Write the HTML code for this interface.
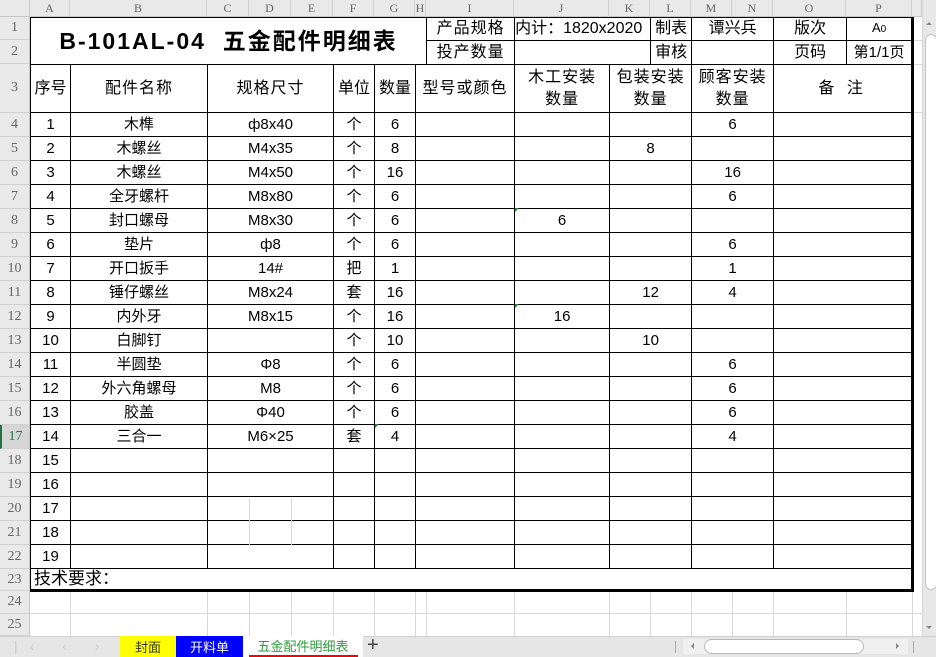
<!DOCTYPE html>
<html><head><meta charset="utf-8">
<style>
*{margin:0;padding:0;box-sizing:border-box}
body{width:936px;height:657px;overflow:hidden;background:#fff;position:relative;font-family:"Liberation Sans","Noto Sans CJK SC",sans-serif}
.hd{position:absolute;background:#e9e9e9;color:#666;font-family:"Liberation Serif","Noto Serif CJK SC",serif;font-size:12px;text-align:center}
.ch{top:0;height:17px;line-height:17px;border-right:1px solid #d0d0d0;border-bottom:1px solid #c8c8c8}
.rh{left:0;width:30px;border-bottom:1px solid #d0d0d0;border-right:1px solid #c8c8c8;font-size:14px;display:flex;align-items:center;justify-content:center}
.vl{position:absolute;width:1px;background:#d8d8d8}
.hl{position:absolute;height:1px;background:#d8d8d8}
table.f{position:absolute;left:30px;top:17px;border-collapse:collapse;table-layout:fixed;width:882px}
table.f td{border:1px solid #000;text-align:center;font-size:15px;color:#000;padding:0;white-space:nowrap;overflow:hidden;line-height:18px}
table.f tr.d td{height:24px}
.b{border-right:3px solid #000 !important}
</style></head><body>
<div class="hd" style="left:0;top:0;width:30px;height:17px;border-right:1px solid #c8c8c8;border-bottom:1px solid #c8c8c8"></div>
<div class="hd ch" style="left:30px;width:40px">A</div>
<div class="hd ch" style="left:70px;width:137px">B</div>
<div class="hd ch" style="left:207px;width:42px">C</div>
<div class="hd ch" style="left:249px;width:42px">D</div>
<div class="hd ch" style="left:291px;width:42px">E</div>
<div class="hd ch" style="left:333px;width:41px">F</div>
<div class="hd ch" style="left:374px;width:41px">G</div>
<div class="hd ch" style="left:415px;width:11px">H</div>
<div class="hd ch" style="left:426px;width:88px">I</div>
<div class="hd ch" style="left:514px;width:95px">J</div>
<div class="hd ch" style="left:609px;width:41px">K</div>
<div class="hd ch" style="left:650px;width:41px">L</div>
<div class="hd ch" style="left:691px;width:41px">M</div>
<div class="hd ch" style="left:732px;width:41px">N</div>
<div class="hd ch" style="left:773px;width:73px">O</div>
<div class="hd ch" style="left:846px;width:66px">P</div>
<div class="hd ch" style="left:912px;width:10px"></div>
<div class="hd rh" style="top:17px;height:23px">1</div>
<div class="hd rh" style="top:40px;height:24px">2</div>
<div class="hd rh" style="top:64px;height:49px">3</div>
<div class="hd rh" style="top:113px;height:24px">4</div>
<div class="hd rh" style="top:137px;height:24px">5</div>
<div class="hd rh" style="top:161px;height:24px">6</div>
<div class="hd rh" style="top:185px;height:24px">7</div>
<div class="hd rh" style="top:209px;height:24px">8</div>
<div class="hd rh" style="top:233px;height:24px">9</div>
<div class="hd rh" style="top:257px;height:24px">10</div>
<div class="hd rh" style="top:281px;height:24px">11</div>
<div class="hd rh" style="top:305px;height:24px">12</div>
<div class="hd rh" style="top:329px;height:24px">13</div>
<div class="hd rh" style="top:353px;height:24px">14</div>
<div class="hd rh" style="top:377px;height:24px">15</div>
<div class="hd rh" style="top:401px;height:24px">16</div>
<div class="hd rh" style="top:425px;height:24px;color:#217346;background:#d6d6d6;border-left:2px solid #217346">17</div>
<div class="hd rh" style="top:449px;height:24px">18</div>
<div class="hd rh" style="top:473px;height:24px">19</div>
<div class="hd rh" style="top:497px;height:24px">20</div>
<div class="hd rh" style="top:521px;height:24px">21</div>
<div class="hd rh" style="top:545px;height:24px">22</div>
<div class="hd rh" style="top:569px;height:22px">23</div>
<div class="hd rh" style="top:591px;height:23px">24</div>
<div class="hd rh" style="top:614px;height:22px">25</div>
<div class="hl" style="left:30px;top:613px;width:892px"></div>
<div class="vl" style="left:70px;top:590px;height:46px"></div>
<div class="vl" style="left:207px;top:590px;height:46px"></div>
<div class="vl" style="left:249px;top:590px;height:46px"></div>
<div class="vl" style="left:291px;top:590px;height:46px"></div>
<div class="vl" style="left:333px;top:590px;height:46px"></div>
<div class="vl" style="left:374px;top:590px;height:46px"></div>
<div class="vl" style="left:415px;top:590px;height:46px"></div>
<div class="vl" style="left:426px;top:590px;height:46px"></div>
<div class="vl" style="left:514px;top:590px;height:46px"></div>
<div class="vl" style="left:609px;top:590px;height:46px"></div>
<div class="vl" style="left:650px;top:590px;height:46px"></div>
<div class="vl" style="left:691px;top:590px;height:46px"></div>
<div class="vl" style="left:732px;top:590px;height:46px"></div>
<div class="vl" style="left:773px;top:590px;height:46px"></div>
<div class="vl" style="left:846px;top:590px;height:46px"></div>
<div class="vl" style="left:912px;top:590px;height:46px"></div>
<div class="hl" style="left:914px;top:40px;width:8px"></div>
<div class="hl" style="left:914px;top:64px;width:8px"></div>
<div class="hl" style="left:914px;top:112px;width:8px"></div>

<table class="f">
<colgroup><col style="width:40px"><col style="width:137px"><col style="width:42px"><col style="width:42px"><col style="width:42px"><col style="width:41px"><col style="width:41px"><col style="width:11px"><col style="width:88px"><col style="width:95px"><col style="width:41px"><col style="width:41px"><col style="width:41px"><col style="width:41px"><col style="width:73px"><col style="width:66px"></colgroup>
<tr style="height:23px"><td colspan="8" rowspan="2" style="font-size:23px;font-weight:bold;letter-spacing:2px">B-101AL-04&nbsp; 五金配件明细表</td><td style="font-size:16px;letter-spacing:1px">产品规格</td><td colspan="2" style="text-align:left;font-size:16px">内计：1820x2020</td><td style="font-size:16px">制表</td><td colspan="2" style="font-size:16px">谭兴兵</td><td style="font-size:16px">版次</td><td class="b" style="font-size:13px">A<span style="font-size:10px">0</span></td></tr>
<tr style="height:24px"><td style="font-size:16px;letter-spacing:1px">投产数量</td><td colspan="2"></td><td style="font-size:16px">审核</td><td colspan="2"></td><td style="font-size:16px">页码</td><td class="b" style="font-size:15px">第1/1页</td></tr>
<tr style="height:48px"><td style="font-size:16px">序号</td><td style="font-size:16px;letter-spacing:1px">配件名称</td><td colspan="3" style="font-size:16px;letter-spacing:1px">规格尺寸</td><td style="font-size:16px">单位</td><td style="font-size:16px">数量</td><td colspan="2" style="font-size:16px;letter-spacing:1px">型号或颜色</td><td style="font-size:16px;line-height:22px;letter-spacing:1px">木工安装<br>数量</td><td colspan="2" style="font-size:16px;line-height:22px;letter-spacing:1px">包装安装<br>数量</td><td colspan="2" style="font-size:16px;line-height:22px;letter-spacing:1px">顾客安装<br>数量</td><td colspan="2" class="b" style="font-size:16px;letter-spacing:4px">备 注</td></tr>
<tr class="d"><td>1</td><td>木榫</td><td colspan="3">ф8x40</td><td>个</td><td>6</td><td colspan="2"></td><td></td><td colspan="2"></td><td colspan="2">6</td><td colspan="2" class="b"></td></tr>
<tr class="d"><td>2</td><td>木螺丝</td><td colspan="3">M4x35</td><td>个</td><td>8</td><td colspan="2"></td><td></td><td colspan="2">8</td><td colspan="2"></td><td colspan="2" class="b"></td></tr>
<tr class="d"><td>3</td><td>木螺丝</td><td colspan="3">M4x50</td><td>个</td><td>16</td><td colspan="2"></td><td></td><td colspan="2"></td><td colspan="2">16</td><td colspan="2" class="b"></td></tr>
<tr class="d"><td>4</td><td>全牙螺杆</td><td colspan="3">M8x80</td><td>个</td><td>6</td><td colspan="2"></td><td></td><td colspan="2"></td><td colspan="2">6</td><td colspan="2" class="b"></td></tr>
<tr class="d"><td>5</td><td>封口螺母</td><td colspan="3">M8x30</td><td>个</td><td>6</td><td colspan="2"></td><td>6</td><td colspan="2"></td><td colspan="2"></td><td colspan="2" class="b"></td></tr>
<tr class="d"><td>6</td><td>垫片</td><td colspan="3">ф8</td><td>个</td><td>6</td><td colspan="2"></td><td></td><td colspan="2"></td><td colspan="2">6</td><td colspan="2" class="b"></td></tr>
<tr class="d"><td>7</td><td>开口扳手</td><td colspan="3">14#</td><td>把</td><td>1</td><td colspan="2"></td><td></td><td colspan="2"></td><td colspan="2">1</td><td colspan="2" class="b"></td></tr>
<tr class="d"><td>8</td><td>锤仔螺丝</td><td colspan="3">M8x24</td><td>套</td><td>16</td><td colspan="2"></td><td></td><td colspan="2">12</td><td colspan="2">4</td><td colspan="2" class="b"></td></tr>
<tr class="d"><td>9</td><td>内外牙</td><td colspan="3">M8x15</td><td>个</td><td>16</td><td colspan="2"></td><td>16</td><td colspan="2"></td><td colspan="2"></td><td colspan="2" class="b"></td></tr>
<tr class="d"><td>10</td><td>白脚钉</td><td colspan="3"></td><td>个</td><td>10</td><td colspan="2"></td><td></td><td colspan="2">10</td><td colspan="2"></td><td colspan="2" class="b"></td></tr>
<tr class="d"><td>11</td><td>半圆垫</td><td colspan="3">Φ8</td><td>个</td><td>6</td><td colspan="2"></td><td></td><td colspan="2"></td><td colspan="2">6</td><td colspan="2" class="b"></td></tr>
<tr class="d"><td>12</td><td>外六角螺母</td><td colspan="3">M8</td><td>个</td><td>6</td><td colspan="2"></td><td></td><td colspan="2"></td><td colspan="2">6</td><td colspan="2" class="b"></td></tr>
<tr class="d"><td>13</td><td>胶盖</td><td colspan="3">Φ40</td><td>个</td><td>6</td><td colspan="2"></td><td></td><td colspan="2"></td><td colspan="2">6</td><td colspan="2" class="b"></td></tr>
<tr class="d"><td>14</td><td>三合一</td><td colspan="3">M6×25</td><td>套</td><td>4</td><td colspan="2"></td><td></td><td colspan="2"></td><td colspan="2">4</td><td colspan="2" class="b"></td></tr>
<tr class="d"><td>15</td><td></td><td colspan="3"></td><td></td><td></td><td colspan="2"></td><td></td><td colspan="2"></td><td colspan="2"></td><td colspan="2" class="b"></td></tr>
<tr class="d"><td>16</td><td></td><td colspan="3"></td><td></td><td></td><td colspan="2"></td><td></td><td colspan="2"></td><td colspan="2"></td><td colspan="2" class="b"></td></tr>
<tr class="d"><td>17</td><td></td><td colspan="3"></td><td></td><td></td><td colspan="2"></td><td></td><td colspan="2"></td><td colspan="2"></td><td colspan="2" class="b"></td></tr>
<tr class="d"><td>18</td><td></td><td colspan="3"></td><td></td><td></td><td colspan="2"></td><td></td><td colspan="2"></td><td colspan="2"></td><td colspan="2" class="b"></td></tr>
<tr class="d"><td>19</td><td></td><td colspan="3"></td><td></td><td></td><td colspan="2"></td><td></td><td colspan="2"></td><td colspan="2"></td><td colspan="2" class="b"></td></tr>
<tr style="height:22px"><td colspan="16" class="b" style="text-align:left;font-size:17px;padding-left:3px;border-bottom:3px solid #000">技术要求：</td></tr>
</table>
<div class="vl" style="left:249px;top:498px;height:47px"></div>
<div class="vl" style="left:291px;top:498px;height:47px"></div>
<div style="position:absolute;left:515px;top:208px;width:0;height:0;border-top:4px solid #1e8b3a;border-right:4px solid transparent"></div>
<div style="position:absolute;left:515px;top:304px;width:0;height:0;border-top:4px solid #1e8b3a;border-right:4px solid transparent"></div>
<div style="position:absolute;left:375px;top:424px;width:0;height:0;border-top:4px solid #1e8b3a;border-right:4px solid transparent"></div>

<div style="position:absolute;left:922px;top:0;width:14px;height:636px;background:#e8e8e8;border-left:1px solid #d8d8d8"></div>
<div style="position:absolute;left:926px;top:22px;width:0;height:0;border-left:3px solid transparent;border-right:3px solid transparent;border-bottom:3px solid #888"></div>
<div style="position:absolute;left:925px;top:34px;width:12px;height:556px;background:#fff;border:1px solid #c4c4c4;border-radius:6px"></div>
<div style="position:absolute;left:926px;top:626px;width:0;height:0;border-left:3px solid transparent;border-right:3px solid transparent;border-top:3px solid #888"></div>

<div style="position:absolute;left:0;top:636px;width:936px;height:21px;background:#e6e6e6;border-top:1px solid #d0d0d0"></div>
<div style="position:absolute;left:14px;top:638px;font-size:14px;color:#ccc;letter-spacing:12px">|‹ ‹ › ›|</div>
<div style="position:absolute;left:120px;top:636px;width:56px;height:21px;background:#ffff00;font-family:'Noto Sans CJK SC',sans-serif;font-size:13px;line-height:21px;text-align:center;color:#333">封面</div>
<div style="position:absolute;left:176px;top:636px;width:67px;height:21px;background:#0000ff;font-family:'Noto Sans CJK SC',sans-serif;font-size:13px;line-height:21px;text-align:center;color:#fff">开料单</div>
<div style="position:absolute;left:243px;top:636px;width:120px;height:21px;background:#fff;font-family:'Noto Sans CJK SC',sans-serif;font-size:13px;line-height:20px;text-align:center;color:#2e9d3a">五金配件明细表</div>
<div style="position:absolute;left:249px;top:655px;width:109px;height:2px;background:#ff0000"></div>
<div style="position:absolute;left:367px;top:634px;font-size:20px;color:#444;font-family:'Liberation Sans',sans-serif">+</div>
<div style="position:absolute;left:675px;top:641px;width:1px;height:12px;background:#aaa"></div>
<div style="position:absolute;left:683px;top:639px;width:225px;height:15px;background:#f0f0f0"></div>
<div style="position:absolute;left:691px;top:643px;width:0;height:0;border-top:3px solid transparent;border-bottom:3px solid transparent;border-right:3px solid #888"></div>
<div style="position:absolute;left:704px;top:639px;width:160px;height:15px;background:#fff;border:1px solid #b8b8b8;border-radius:8px"></div>
<div style="position:absolute;left:896px;top:643px;width:0;height:0;border-top:3px solid transparent;border-bottom:3px solid transparent;border-left:3px solid #888"></div>
<div style="position:absolute;left:913px;top:641px;width:1px;height:12px;background:#aaa"></div>
</body></html>
